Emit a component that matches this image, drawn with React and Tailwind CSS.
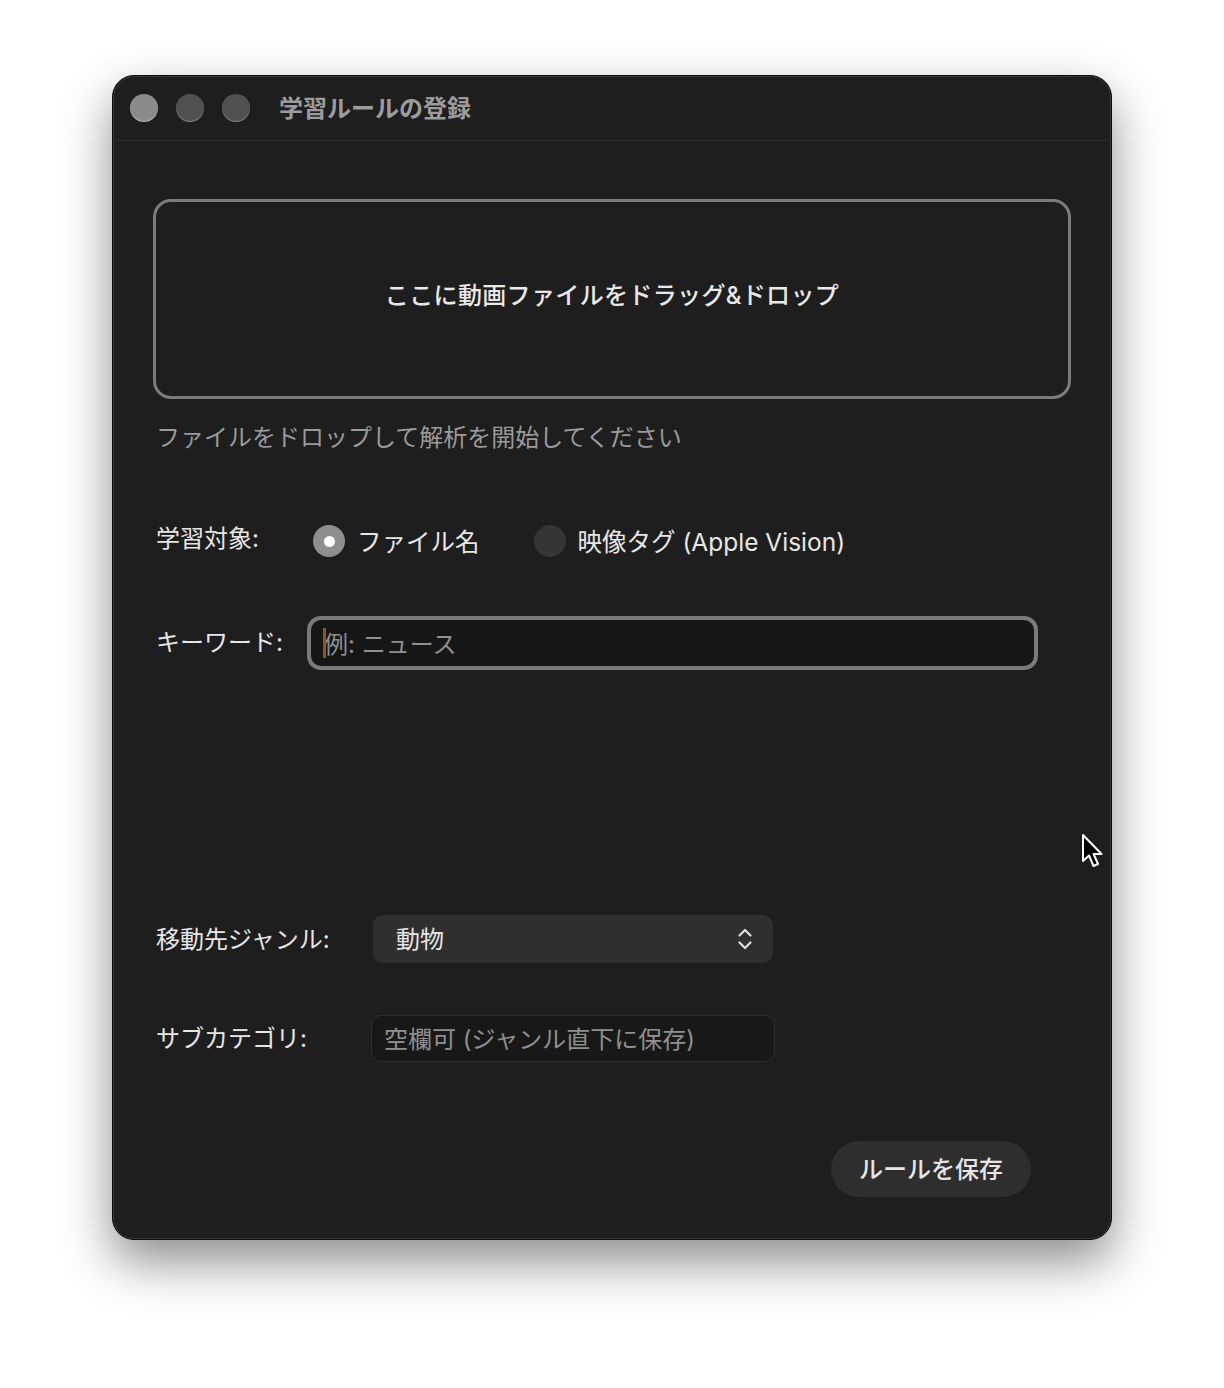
import { useState } from 'react'

const font = { fontFamily: 'Inter, "Noto Sans CJK JP", sans-serif' }

function Radio({ checked, label, onClick }) {
  return (
    <button onClick={onClick} className="flex items-center gap-[12px]">
      <span
        className={`w-[32px] h-[32px] rounded-full flex items-center justify-center ${
          checked ? 'bg-[#8e8e8e]' : 'bg-[#353535]'
        }`}
      >
        {checked && <span className="w-[11px] h-[11px] rounded-full bg-white" />}
      </span>
      <span className="text-[24.5px] text-[#e6e6e6] mt-[2px]">{label}</span>
    </button>
  )
}

function Cursor() {
  return (
    <svg className="absolute left-[1080px] top-[833px]" width="26" height="38" viewBox="0 0 26 38">
      <path
        d="M3 2 L3 28 L9 22.5 L13.5 33 L18 31 L13.6 21 L21.5 21 Z"
        fill="#000"
        stroke="#fff"
        strokeWidth="2"
        strokeLinejoin="round"
      />
    </svg>
  )
}

export default function App() {
  const [target, setTarget] = useState('file') // 'file' | 'vision'
  const [keyword, setKeyword] = useState('')
  const [sub, setSub] = useState('')

  return (
    <div className="relative w-[1224px] h-[1388px] bg-white pt-[75px] pl-[112px]" style={font}>
      <div className="w-[1000px] h-[1165px] rounded-[22px] bg-[#1e1e1e] border border-[#0c0c0c] shadow-[0_22px_50px_rgba(0,0,0,0.45),inset_0_0_0_1px_rgba(255,255,255,0.12)] flex flex-col overflow-hidden">
        {/* title bar */}
        <div className="h-[65px] shrink-0 flex items-center pl-[17px] border-b border-[#2c2c2c]">
          <div className="flex gap-[18px]">
            <span className="w-[28px] h-[28px] rounded-full bg-[#8a8a8a] shadow-[inset_0_-1px_1px_rgba(255,255,255,0.35)]" />
            <span className="w-[28px] h-[28px] rounded-full bg-[#505050] shadow-[inset_0_-1px_1px_rgba(255,255,255,0.3)]" />
            <span className="w-[28px] h-[28px] rounded-full bg-[#505050] shadow-[inset_0_-1px_1px_rgba(255,255,255,0.3)]" />
          </div>
          <h1 className="ml-[29px] mt-[2px] text-[24px] font-bold text-[#9c9c9c]">学習ルールの登録</h1>
        </div>

        <div className="flex flex-col px-[40px] pt-[58px]">
          {/* drop zone */}
          <div className="h-[200px] rounded-[18px] border-[3px] border-[#7b7b7b] flex items-center justify-center">
            <span className="text-[24px] font-medium text-[#e8e8e8] tracking-[0.35px] -mt-[6px]">
              ここに動画ファイルをドラッグ&ドロップ
            </span>
          </div>

          <p className="mt-[23px] h-[32px] leading-[32px] pl-[3px] text-[24px] text-[#9a9a9a]">
            ファイルをドロップして解析を開始してください
          </p>

          {/* target */}
          <div className="mt-[67px] h-[40px] flex items-center pl-[3px]">
            <span className="w-[157px] text-[24px] text-[#e6e6e6] -mt-[4px]">学習対象:</span>
            <div className="flex items-center gap-[54px]">
              <Radio checked={target === 'file'} label="ファイル名" onClick={() => setTarget('file')} />
              <Radio checked={target === 'vision'} label="映像タグ (Apple Vision)" onClick={() => setTarget('vision')} />
            </div>
          </div>

          {/* keyword */}
          <div className="mt-[55px] h-[54px] flex items-center pl-[3px]">
            <span className="w-[151px] text-[24px] text-[#e6e6e6] -mt-[1px]">キーワード:</span>
            <div className="relative w-[731px] h-[54px] rounded-[14px] border-[4px] border-[#7a7a7a] bg-[#161616]">
              <input
                value={keyword}
                onChange={e => setKeyword(e.target.value)}
                placeholder="例: ニュース"
                className="w-full h-full bg-transparent pl-[13px] pr-3 pt-[2px] text-[24px] text-[#e6e6e6] placeholder:text-[#8f8f8f] outline-none"
              />
              <span className="absolute left-[12px] top-[8px] w-[3px] h-[30px] bg-[#8a5527]" />
            </div>
          </div>

          {/* genre */}
          <div className="mt-[245px] h-[48px] flex items-center pl-[3px]">
            <span className="w-[217px] text-[24px] text-[#e6e6e6] mt-[1px]">移動先ジャンル:</span>
            <button className="w-[400px] h-[48px] rounded-[10px] bg-[#2f2f2f] flex items-center justify-between pl-[23px] pr-[20px]">
              <span className="text-[24px] text-[#e6e6e6] mt-[2px]">動物</span>
              <svg width="16" height="24" viewBox="0 0 16 24" fill="none" stroke="#e0e0e0" strokeWidth="2.2" strokeLinecap="round" strokeLinejoin="round">
                <path d="M2.5 8.5 L8 3 L13.5 8.5" />
                <path d="M2.5 15.5 L8 21 L13.5 15.5" />
              </svg>
            </button>
          </div>

          {/* sub category */}
          <div className="mt-[52px] h-[47px] flex items-center pl-[3px]">
            <span className="w-[215px] text-[24px] text-[#e6e6e6] mt-[1px]">サブカテゴリ:</span>
            <input
              value={sub}
              onChange={e => setSub(e.target.value)}
              placeholder="空欄可 (ジャンル直下に保存)"
              className="w-[404px] h-[47px] rounded-[10px] bg-[#181818] border border-[#2e2e2e] pl-[12px] pt-[2px] text-[24px] text-[#e6e6e6] placeholder:text-[#8f8f8f] outline-none"
            />
          </div>

          {/* save */}
          <div className="mt-[79px] flex justify-end pr-[40px]">
            <button className="w-[200px] h-[56px] rounded-full bg-[#2e2e2e] text-[24px] text-[#e6e6e6] font-medium pt-[2px]">
              ルールを保存
            </button>
          </div>
        </div>
      </div>
      <Cursor />
    </div>
  )
}
